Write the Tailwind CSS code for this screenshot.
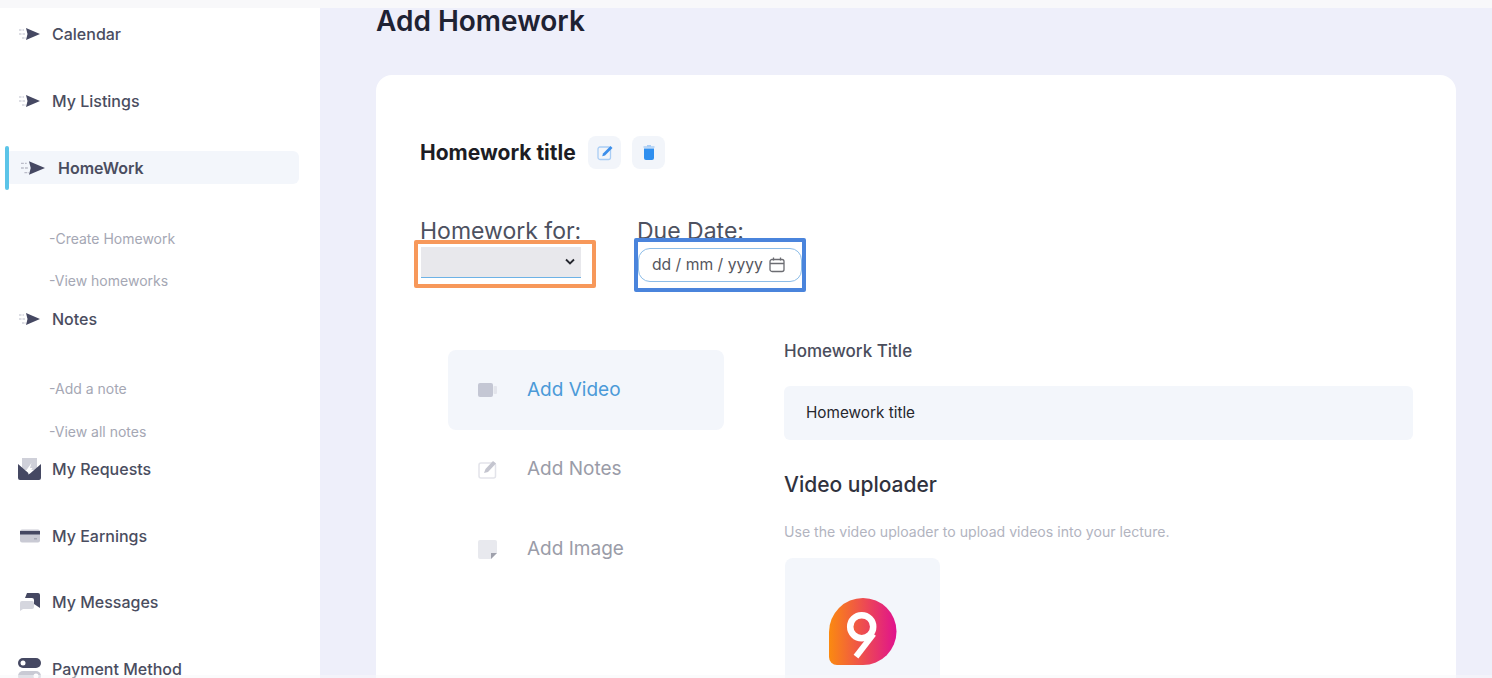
<!DOCTYPE html>
<html lang="en">
<head>
  <meta charset="UTF-8" />
  <meta name="viewport" content="width=device-width, initial-scale=1.0" />
  <title>Add Homework</title>
  <script src="https://cdn.jsdelivr.net/npm/@tailwindcss/browser@4"></script>
</head>
<body class="m-0 font-['Inter',sans-serif]">
  <!-- page frame -->
  <div class="relative flex flex-col w-[1492px] h-[678px] overflow-hidden bg-[#eeeffa]">
    <div class="h-2 shrink-0 bg-[#f8f8fa]"></div>

    <div class="flex flex-1 min-h-0">
      <!-- sidebar -->
      <aside class="w-[320px] shrink-0 bg-white pt-[14px] text-[16px] font-medium text-[#4a4d60]">
        <a class="flex items-center gap-3 h-6 pl-[19px]">
          <svg class="w-[21px] h-[14px]" viewBox="0 0 21 14"><path d="M7 1l14 6-14 6 1.500-6z" fill="#454862"/><path d="M0 3h5M0 7h7M3 11h4" stroke="#bcbdc9" stroke-width="1.200" stroke-dasharray="2.500 1"/></svg>
          <span>Calendar</span>
        </a>
        <a class="flex items-center gap-3 h-6 pl-[19px] mt-[43px]">
          <svg class="w-[21px] h-[14px]" viewBox="0 0 21 14"><path d="M7 1l14 6-14 6 1.500-6z" fill="#454862"/><path d="M0 3h5M0 7h7M3 11h4" stroke="#bcbdc9" stroke-width="1.200" stroke-dasharray="2.500 1"/></svg>
          <span>My Listings</span>
        </a>
        <!-- active item -->
        <div class="relative ml-[5px] mt-[28px] h-[53px] flex items-center">
          <span class="absolute left-0 top-[5px] w-1 h-[44px] rounded bg-[#5bc4e8]"></span>
          <a class="flex items-center gap-[13px] w-[294px] h-[33px] ml-0 pl-4 rounded-md bg-[#f3f6fb] font-semibold">
            <svg class="w-6 h-4" viewBox="0 0 21 14"><path d="M7 1l14 6-14 6 1.500-6z" fill="#454862"/><path d="M0 3h5M0 7h7M3 11h4" stroke="#bcbdc9" stroke-width="1.200" stroke-dasharray="2.500 1"/></svg>
            <span>HomeWork</span>
          </a>
        </div>
        <a class="block pl-[49px] mt-[33px] h-6 leading-6 text-[14px] font-normal text-[#a5a7b4]">-Create Homework</a>
        <a class="block pl-[49px] mt-[18px] h-6 leading-6 text-[14px] font-normal text-[#a5a7b4]">-View homeworks</a>
        <a class="flex items-center gap-3 h-6 pl-[19px] mt-[14px]">
          <svg class="w-[21px] h-[14px]" viewBox="0 0 21 14"><path d="M7 1l14 6-14 6 1.500-6z" fill="#454862"/><path d="M0 3h5M0 7h7M3 11h4" stroke="#bcbdc9" stroke-width="1.200" stroke-dasharray="2.500 1"/></svg>
          <span>Notes</span>
        </a>
        <a class="block pl-[49px] mt-[46px] h-6 leading-6 text-[14px] font-normal text-[#a5a7b4]">-Add a note</a>
        <a class="block pl-[49px] mt-[19px] h-6 leading-6 text-[14px] font-normal text-[#a5a7b4]">-View all notes</a>
        <a class="flex items-center gap-[11px] h-6 pl-[18px] mt-[13px]">
          <svg class="w-[23px] h-[22px]" viewBox="0 0 23 22"><path d="M4 0h15v12H4z" fill="#cfd0d9"/><path d="M0 6l11.500 10L23 6v14a2 2 0 01-2 2H2a2 2 0 01-2-2z" fill="#454862"/><path d="M13.500 5l-5 7h2.500L10 17l4.500-7H12z" fill="#fff"/></svg>
          <span>My Requests</span>
        </a>
        <a class="flex items-center gap-3 h-6 pl-5 mt-[43px]">
          <svg class="w-5 h-[14px]" viewBox="0 0 20 14"><rect width="20" height="13" y="0.500" rx="2" fill="#c9cad4"/><rect width="20" height="3.500" y="2" fill="#454862"/><rect x="14" y="9" width="3" height="1.500" fill="#a5a7b4"/></svg>
          <span>My Earnings</span>
        </a>
        <a class="flex items-center gap-3 h-6 pl-5 mt-[42px]">
          <svg class="w-5 h-[18px]" viewBox="0 0 20 18"><path d="M7 0h11a2 2 0 012 2v13l-6-4V7a2 2 0 00-2-2H5z" fill="#454862"/><path d="M2 8h10a2 2 0 012 2v4a2 2 0 01-2 2H3l-3 2v-8a2 2 0 012-2z" fill="#d5d6de"/></svg>
          <span>My Messages</span>
        </a>
        <a class="flex items-center gap-[11px] h-6 pl-[18px] mt-[43px]">
          <svg class="w-[23px] h-[22px]" viewBox="0 0 23 22"><rect width="23" height="10" rx="5" fill="#454862"/><circle cx="5" cy="5" r="2.500" fill="#fff"/><rect y="13" width="23" height="10" rx="5" fill="#c9cad4"/><circle cx="18" cy="18" r="2.500" fill="#fff"/></svg>
          <span class="leading-4">Payment Method</span>
        </a>
      </aside>

      <!-- main -->
      <main class="flex-1 min-w-0 pl-[56px] pr-[36px]">
        <h1 class="h-[26px] leading-[26px] text-[28px] font-semibold text-[#1e2233]">Add Homework</h1>

        <section class="mt-[41px] h-[700px] rounded-2xl bg-white pt-[61px] pl-[44px] pr-[43px]">
          <!-- title row -->
          <div class="flex items-center h-[33px]">
            <h2 class="w-[168px] pt-px text-[21px] font-bold text-[#1d1d24] whitespace-nowrap">Homework title</h2>
            <button class="flex items-center justify-center w-[33px] h-[33px] rounded-lg bg-[#f2f5fa]">
              <svg class="w-4 h-4" viewBox="0 0 16 16"><rect x="1" y="2" width="12.500" height="12.500" rx="2" fill="none" stroke="#a9cdf5" stroke-width="1.300"/><path d="M13.500 1l2 2L8 10.500l-2.800.8.800-2.800z" fill="#3b8eea"/></svg>
            </button>
            <button class="flex items-center justify-center w-[33px] h-[33px] ml-[11px] rounded-lg bg-[#f2f5fa]">
              <svg class="w-[12px] h-[15px]" viewBox="0 0 12 15"><path d="M1 3.500h10V13a2 2 0 01-2 2H3a2 2 0 01-2-2z" fill="#2f8fef"/><path d="M0.500 2h11M4 .7h4" stroke="#a9cdf5" stroke-width="1.300"/></svg>
            </button>
          </div>

          <!-- select + date -->
          <div class="flex mt-[46px] h-[78px]">
            <div class="relative w-[161px]">
              <label class="block h-[32px] leading-[32px] text-[23px] text-[#4d5160] whitespace-nowrap">Homework for:</label>
              <div class="relative flex items-center justify-end h-[31px] ml-px pr-[5px] bg-[#e8e8ec] border-b border-[#6db2e6]">
                <svg class="w-3 h-2" viewBox="0 0 12 8"><path d="M2 1.500l4 4 4-4" fill="none" stroke="#25272f" stroke-width="1.800"/></svg>
              </div>
              <div class="absolute left-[-6px] top-[25px] w-[182px] h-[48px] border-4 border-[#f7985a] rounded-[2px]"></div>
            </div>
            <div class="relative ml-[56px] w-[164px]">
              <label class="block h-[33px] leading-[32px] text-[23px] text-[#4d5160] whitespace-nowrap">Due Date:</label>
              <div class="flex items-center w-[164px] h-[34px] ml-px pl-[13px] rounded-xl bg-white border border-[#8dbde8] text-[15.700px] text-[#55565e]">
                <span class="whitespace-nowrap">dd / mm / yyyy</span>
                <svg class="w-4 h-4 ml-[6px] shrink-0" viewBox="0 0 16 16" fill="none" stroke="#6b6c72" stroke-width="1.300"><rect x="1" y="2.500" width="14" height="12" rx="2"/><path d="M1 6.500h14M4.500 .5v3M11.500 .5v3"/></svg>
              </div>
              <div class="absolute left-[-3px] top-[23px] w-[172px] h-[54px] border-4 border-[#4a84dc] rounded-[2px]"></div>
            </div>
          </div>

          <!-- tabs + form -->
          <div class="flex mt-[57px]">
            <nav class="w-[276px] ml-[28px] text-[19px]">
              <a class="flex items-center h-[80px] pl-[30px] gap-[30px] rounded-lg bg-[#f3f6fb] text-[#4b9ad8]">
                <svg class="w-[19px] h-[14px]" viewBox="0 0 19 14"><rect width="15" height="14" rx="2" fill="#c4c7d4"/><rect x="15.500" y="3" width="3.500" height="8" rx="1" fill="#e3e5ec"/></svg>
                <span>Add Video</span>
              </a>
              <a class="flex items-center h-[79px] pl-[30px] gap-[30px] text-[#9a9ca8]">
                <svg class="w-[19px] h-[18px]" viewBox="0 0 19 18"><rect x="1" y="2" width="16.500" height="15" rx="2" fill="none" stroke="#e3e4ea" stroke-width="1.500"/><path d="M15 0l3 2.500L10 11l-4 1 1.500-4z" fill="#c4c5cf"/></svg>
                <span>Add Notes</span>
              </a>
              <a class="flex items-center h-[80px] pl-[30px] gap-[30px] text-[#9a9ca8]">
                <svg class="w-[19px] h-[19px]" viewBox="0 0 19 19"><path d="M2 0h15a2 2 0 012 2v11l-6 6H2a2 2 0 01-2-2V2a2 2 0 012-2z" fill="#e8e9ee"/><path d="M13 13h6l-6 6z" fill="#9fa1ac"/></svg>
                <span>Add Image</span>
              </a>
            </nav>

            <div class="flex-1 ml-[60px] -mt-[11px]">
              <label class="block h-6 leading-6 text-[17px] font-medium text-[#4a4d5c]">Homework Title</label>
              <div class="flex items-center h-[54px] mt-[23px] pl-[22px] rounded-md bg-[#f3f6fb] text-[15.300px] text-[#26272e]">Homework title</div>
              <h3 class="h-7 leading-7 mt-[31px] text-[21px] font-medium text-[#30323e]">Video uploader</h3>
              <p class="h-5 leading-5 mt-[23px] text-[14.100px] text-[#b2b4bf]">Use the video uploader to upload videos into your lecture.</p>
              <div class="flex justify-center w-[155px] h-[160px] ml-px mt-4 pt-10 rounded-lg bg-[#f3f6fb]">
                <svg class="w-[68px] h-[68px]" viewBox="0 0 68 68">
                  <defs><linearGradient id="logoGrad" x1="0" x2="1" y1="0" y2="0"><stop offset="0" stop-color="#fb8a10"/><stop offset="1" stop-color="#e0128e"/></linearGradient></defs>
                  <path d="M34 0a33.500 33.500 0 010 67H8a8 8 0 01-8-8V34A34 34 0 0134 0z" fill="url(#logoGrad)"/>
                  <circle cx="32.700" cy="28.700" r="11.500" fill="none" stroke="#fff" stroke-width="6.500"/>
                  <path d="M44.500 36L27 58.700" stroke="#fff" stroke-width="6"/>
                </svg>
              </div>
            </div>
          </div>
        </section>
      </main>
    </div>

    <!-- faint strip along the bottom edge -->
    <div class="absolute left-0 right-0 bottom-0 h-[3px] bg-[#f8f8fa]/50"></div>
  </div>
</body>
</html>
